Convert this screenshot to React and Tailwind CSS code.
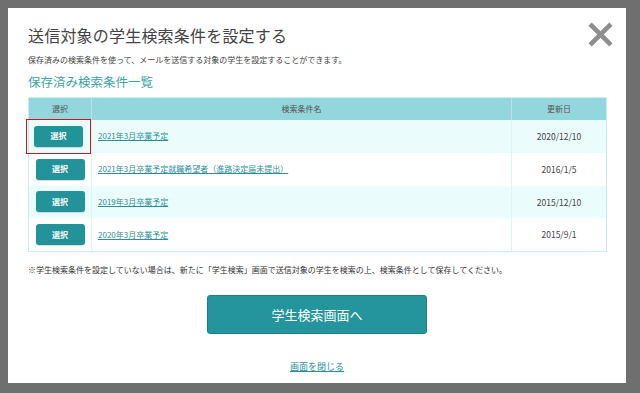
import React from "react";

const rows = [
  { name: "2021年3月卒業予定", date: "2020/12/10", focus: true },
  { name: "2021年3月卒業予定就職希望者（進路決定届未提出）", date: "2016/1/5" },
  { name: "2019年3月卒業予定", date: "2015/12/10" },
  { name: "2020年3月卒業予定", date: "2015/9/1" },
];

const App = () => {
  return (
    <div
      className="w-[640px] h-[393px] bg-[#6f6f6f] pt-[8px] pl-[8px] overflow-hidden"
      style={{ fontFamily: '"Noto Sans CJK JP", "Noto Sans", sans-serif' }}
    >
      <div className="relative w-[618px] h-[375px] bg-white pt-[16px] px-[20px]">
        {/* close */}
        <button className="absolute left-[579px] top-[13px] w-[27px] h-[27px]">
          <svg viewBox="0 0 26 26" className="w-[27px] h-[27px]">
            <path d="M3 3L23 23M23 3L3 23" stroke="#8e8e8e" strokeWidth="4.5" fill="none" />
          </svg>
        </button>

        <h1 className="text-[16px] leading-[22px] text-[#444] tracking-[0.2px]">
          送信対象の学生検索条件を設定する
        </h1>
        <p className="mt-[8px] text-[8px] leading-[12px] text-[#444]">
          保存済みの検索条件を使って、メールを送信する対象の学生を設定することができます。
        </p>
        <h2 className="mt-[8px] text-[12.5px] leading-[16px] text-[#3ba3ab]">
          保存済み検索条件一覧
        </h2>

        <div className="mt-[7px] w-[579px] border border-[#c9edf0]">
          <div className="flex h-[22px] bg-[#93d6dc] text-[8px] text-[#555]">
            <div className="w-[63px] flex items-center justify-center border-r border-[#b5e5e9]">選択</div>
            <div className="w-[420px] flex items-center justify-center border-r border-[#b5e5e9]">検索条件名</div>
            <div className="flex-1 flex items-center justify-center">更新日</div>
          </div>
          {rows.map((r, i) => (
            <div
              key={i}
              className={`flex h-[32.75px] ${i % 2 === 0 ? "bg-[#ebfcfc]" : "bg-white"}`}
            >
              <div className="w-[63px] flex items-center justify-center border-r border-[#dff3f4]">
                <div
                  className={
                    r.focus
                      ? "border border-[#c8161d] w-[69px] h-[35px] -ml-[3px] flex items-center justify-center"
                      : "flex items-center justify-center"
                  }
                >
                  <button className="w-[49px] h-[21px] rounded-[3px] bg-[#23939a] text-white text-[8px] font-bold shadow-[0_1px_1px_rgba(0,0,0,0.15)]">
                    選択
                  </button>
                </div>
              </div>
              <div className="w-[420px] flex items-center pl-[6px] border-r border-[#dff3f4]">
                <a href="#" className="text-[8px] text-[#2b8f97] underline">
                  {r.name}
                </a>
              </div>
              <div className="flex-1 flex items-center justify-center text-[8.5px] text-[#444]">
                {r.date}
              </div>
            </div>
          ))}
        </div>

        <p className="mt-[12px] text-[8px] leading-[12px] text-[#333]">
          ※学生検索条件を設定していない場合は、新たに「学生検索」画面で送信対象の学生を検索の上、検索条件として保存してください。
        </p>

        <div className="mt-[19px] flex justify-center">
          <button className="w-[220px] h-[39px] rounded-[3px] bg-[#24959c] border border-[#1d7f85] text-white text-[13px]">
            学生検索画面へ
          </button>
        </div>

        <div className="mt-[27px] flex justify-center">
          <a href="#" className="text-[9px] leading-[12px] text-[#2b8f97] underline">
            画面を閉じる
          </a>
        </div>
      </div>
    </div>
  );
};

export default App;
